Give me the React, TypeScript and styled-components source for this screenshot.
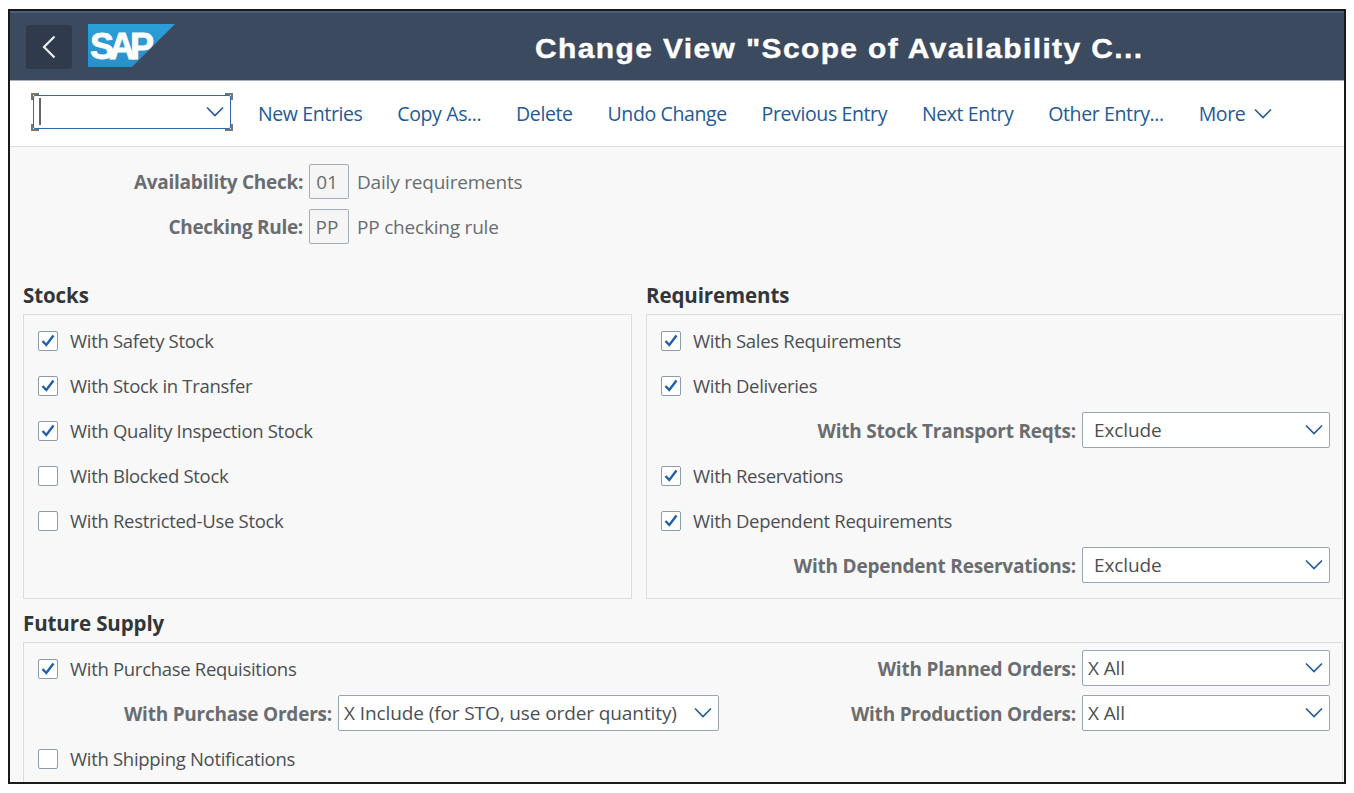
import styled, { createGlobalStyle } from "styled-components";

const GlobalStyle = createGlobalStyle`
  html, body {
    margin: 0;
    padding: 0;
    background: #fff;
    overflow: hidden;
  }
  body {
    font-family: "Open Sans", "Noto Sans", sans-serif;
  }
`;

const Frame = styled.div`
  box-sizing: border-box;
  width: 1338px;
  height: 775px;
  margin: 9px 0 0 8px;
  border: 2px solid #1a1a1a;
  background: #f8f8f8;
  overflow: hidden;
`;

const Header = styled.header`
  box-sizing: border-box;
  height: 70px;
  background: #3c4a5f;
  border-top: 2px solid #4c6079;
  border-bottom: 1px solid #a9b0b9;
  display: flex;
  align-items: center;
  padding-left: 16px;
`;

const BackButton = styled.button`
  width: 46px;
  height: 44px;
  margin-top: 0;
  padding: 0;
  border: 0;
  border-radius: 3px;
  background: #2f3b4d;
  display: flex;
  align-items: center;
  justify-content: center;
`;

const Logo = styled.svg`
  width: 87px;
  height: 43px;
  margin: -3px 0 0 16px;
  flex: none;
`;

const Title = styled.h1`
  margin: 5px 0 0 360px;
  font-family: "Liberation Sans", Arial, sans-serif;
  font-size: 28px;
  font-weight: 700;
  letter-spacing: 1.3px;
  color: #fff;
  white-space: nowrap;
  -webkit-text-stroke: 0.4px #fff;
  transform: scaleX(1.07);
  transform-origin: left center;
`;

const Toolbar = styled.nav`
  box-sizing: border-box;
  height: 66px;
  background: #fff;
  border-bottom: 1px solid #dcdddf;
  display: flex;
  align-items: center;
  padding-left: 23px;
`;

const FocusBox = styled.div`
  position: relative;
  box-sizing: border-box;
  width: 198px;
  height: 34px;
  margin: 0 27px 4px 0;
  background: #fff;
  border: 1px solid #2b6cb0;
  border-radius: 2px;
  display: flex;
  align-items: center;
  justify-content: flex-end;
  padding-right: 5px;
`;

const Caret = styled.span`
  position: absolute;
  left: 5px;
  top: 2px;
  width: 2px;
  height: 27px;
  background: #666;
`;

const Corner = styled.span<{ $v: "top" | "bottom"; $h: "left" | "right" }>`
  position: absolute;
  width: 6px;
  height: 5px;
  ${({ $v }) => `${$v}: -3px; border-${$v}: 2px solid #777;`}
  ${({ $h }) => `${$h}: -3px; border-${$h}: 2px solid #777;`}
`;

const ToolLink = styled.a<{ $last?: boolean }>`
  font-size: 19.5px;
  color: #215a9a;
  letter-spacing: -0.38px;
  white-space: nowrap;
  margin-right: ${({ $last }) => ($last ? 0 : 34.8)}px;
  display: flex;
  align-items: center;
  gap: 8px;
`;

const Content = styled.main`
  padding: 0 0 0 13px;
`;

const InfoBlock = styled.div`
  padding-top: 12px;
  display: grid;
  grid-template-columns: 280px auto 1fr;
  grid-auto-rows: 45px;
  align-items: center;
  height: 135px;
  box-sizing: border-box;
`;

const InfoLabel = styled.span`
  font-size: 19px;
  font-weight: 700;
  letter-spacing: -0.3px;
  color: #6a6d70;
  text-align: right;
  white-space: nowrap;
`;

const KeyBox = styled.span`
  box-sizing: border-box;
  width: 40px;
  height: 35px;
  margin-left: 6px;
  padding-right: 4px;
  border: 1px solid #a5adb5;
  border-radius: 2px;
  background: #f5f5f5;
  color: #6a6d70;
  font-size: 19px;
  display: flex;
  align-items: center;
  justify-content: center;
`;

const InfoText = styled.span`
  margin-left: 8px;
  font-size: 19px;
  letter-spacing: -0.2px;
  color: #6a6d70;
`;

const Columns = styled.div`
  display: grid;
  grid-template-columns: 609px 697px;
  column-gap: 14px;
`;

const SectionTitle = styled.h2`
  margin: 0;
  height: 32px;
  font-size: 20.5px;
  line-height: 26px;
  font-weight: 700;
  letter-spacing: -0.1px;
  color: #32363a;
`;

const Panel = styled.section<{ $height?: number }>`
  box-sizing: border-box;
  border: 1px solid #dcdddf;
  padding-top: 3px;
  ${({ $height }) => ($height ? `height: ${$height}px;` : "")}
`;

const Row = styled.div`
  height: 45px;
  display: flex;
  align-items: center;
  padding-left: 14px;
`;

const FieldRow = styled.div<{ $labelEnd: number }>`
  height: 45px;
  display: grid;
  grid-template-columns: ${({ $labelEnd }) => $labelEnd}px auto;
  align-items: center;
`;

const CheckBox = styled.span`
  box-sizing: border-box;
  width: 20px;
  height: 20px;
  flex: none;
  border: 1px solid #8d9cab;
  border-radius: 2px;
  background: #fff;
  display: flex;
  align-items: center;
  justify-content: center;
`;

const CheckLabel = styled.span`
  margin-left: 12px;
  font-size: 18.5px;
  letter-spacing: -0.3px;
  color: #4b4f54;
  white-space: nowrap;
`;

const FieldLabel = styled.span`
  font-size: 19px;
  font-weight: 700;
  letter-spacing: -0.22px;
  color: #6a6d70;
  text-align: right;
  white-space: nowrap;
`;

const Select = styled.div<{ $width: number; $inset: number }>`
  box-sizing: border-box;
  width: ${({ $width }) => $width}px;
  height: 36px;
  margin: 0 0 2px 6px;
  padding: 0 5px 0 ${({ $inset }) => $inset}px;
  border: 1px solid #9aa5b1;
  border-radius: 2px;
  background: #fff;
  font-size: 19px;
  letter-spacing: -0.1px;
  color: #4b4f54;
  display: flex;
  align-items: center;
  justify-content: space-between;
  white-space: nowrap;
`;

const FutureTitle = styled(SectionTitle)`
  height: 32px;
  margin-top: 11px;
`;

const FuturePanel = styled(Panel)`
  width: 1320px;
  height: 200px;
  display: grid;
  grid-template-columns: 697px 1fr;
`;

const Chevron = () => (
  <svg width="20" height="11" viewBox="0 0 20 11" fill="none">
    <path d="M2 1.5 10 9.5 18 1.5" stroke="#215a9a" strokeWidth="1.6" />
  </svg>
);

const Check = ({ checked, label }: { checked: boolean; label: string }) => (
  <Row>
    <CheckBox>
      {checked && (
        <svg width="14" height="13" viewBox="0 0 14 13" fill="none">
          <path d="M1.5 7 5.3 11 12.5 1.5" stroke="#1f5ea8" strokeWidth="2.4" />
        </svg>
      )}
    </CheckBox>
    <CheckLabel>{label}</CheckLabel>
  </Row>
);

const Field = ({
  label,
  value,
  labelEnd,
  width,
  inset,
}: {
  label: string;
  value: string;
  labelEnd: number;
  width: number;
  inset: number;
}) => (
  <FieldRow $labelEnd={labelEnd}>
    <FieldLabel>{label}</FieldLabel>
    <Select $width={width} $inset={inset}>
      {value}
      <Chevron />
    </Select>
  </FieldRow>
);

const links = [
  "New Entries",
  "Copy As...",
  "Delete",
  "Undo Change",
  "Previous Entry",
  "Next Entry",
  "Other Entry...",
];

const App = () => (
  <>
    <GlobalStyle />
    <Frame>
      <Header>
        <BackButton aria-label="Back">
          <svg width="14" height="24" viewBox="0 0 14 24" fill="none">
            <path d="M12.5 1.5 2 12 12.5 22.5" stroke="#eef1f4" strokeWidth="2.2" />
          </svg>
        </BackButton>
        <Logo viewBox="0 0 87 43">
          <defs>
            <linearGradient id="sapBlue" x1="0" y1="0" x2="0" y2="1">
              <stop offset="0" stopColor="#2a9fd8" />
              <stop offset="1" stopColor="#2a8fcb" />
            </linearGradient>
          </defs>
          <path d="M0 0H87L44 43H0Z" fill="url(#sapBlue)" />
          <text
            x="2"
            y="35"
            fontFamily="'Liberation Sans', Arial, sans-serif"
            fontSize="36"
            fontWeight="700"
            letterSpacing="-5"
            fill="#fff"
            stroke="#fff"
            strokeWidth="0.8"
          >
            SAP
          </text>
        </Logo>
        <Title>Change View "Scope of Availability C...</Title>
      </Header>
      <Toolbar>
        <FocusBox>
          <Caret />
          <Corner $v="top" $h="left" />
          <Corner $v="top" $h="right" />
          <Corner $v="bottom" $h="left" />
          <Corner $v="bottom" $h="right" />
          <Chevron />
        </FocusBox>
        {links.map((text) => (
          <ToolLink key={text}>{text}</ToolLink>
        ))}
        <ToolLink $last>
          More
          <Chevron />
        </ToolLink>
      </Toolbar>
      <Content>
        <InfoBlock>
          <InfoLabel>Availability Check:</InfoLabel>
          <KeyBox>01</KeyBox>
          <InfoText>Daily requirements</InfoText>
          <InfoLabel>Checking Rule:</InfoLabel>
          <KeyBox>PP</KeyBox>
          <InfoText>PP checking rule</InfoText>
        </InfoBlock>
        <Columns>
          <div>
            <SectionTitle>Stocks</SectionTitle>
            <Panel $height={285}>
              <Check checked label="With Safety Stock" />
              <Check checked label="With Stock in Transfer" />
              <Check checked label="With Quality Inspection Stock" />
              <Check checked={false} label="With Blocked Stock" />
              <Check checked={false} label="With Restricted-Use Stock" />
            </Panel>
          </div>
          <div>
            <SectionTitle>Requirements</SectionTitle>
            <Panel $height={285}>
              <Check checked label="With Sales Requirements" />
              <Check checked label="With Deliveries" />
              <Field label="With Stock Transport Reqts:" value="Exclude" labelEnd={429} width={248} inset={11} />
              <Check checked label="With Reservations" />
              <Check checked label="With Dependent Requirements" />
              <Field label="With Dependent Reservations:" value="Exclude" labelEnd={429} width={248} inset={11} />
            </Panel>
          </div>
        </Columns>
        <FutureTitle>Future Supply</FutureTitle>
        <FuturePanel>
          <div>
            <Check checked label="With Purchase Requisitions" />
            <Field label="With Purchase Orders:" value="X Include (for STO, use order quantity)" labelEnd={308} width={381} inset={5} />
            <Check checked={false} label="With Shipping Notifications" />
          </div>
          <div>
            <Field label="With Planned Orders:" value="X All" labelEnd={355} width={248} inset={5} />
            <Field label="With Production Orders:" value="X All" labelEnd={355} width={248} inset={5} />
          </div>
        </FuturePanel>
      </Content>
    </Frame>
  </>
);

export default App;
